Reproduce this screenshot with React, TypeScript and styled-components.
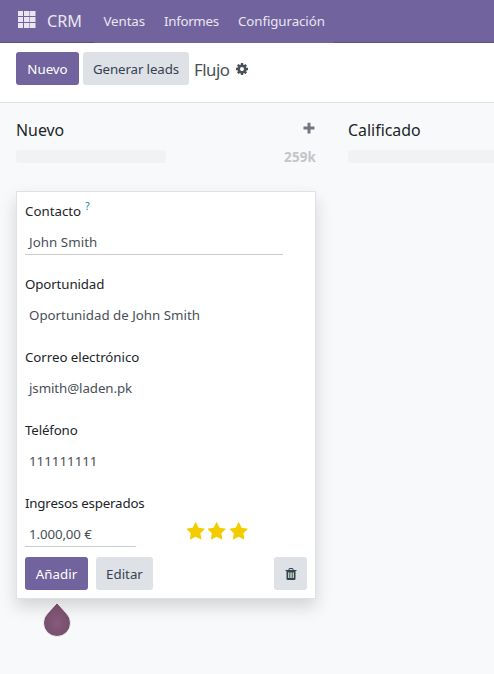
import React from 'react';
import styled, { createGlobalStyle } from 'styled-components';

const GlobalStyle = createGlobalStyle`
  *, *::before, *::after { box-sizing: border-box; }
  html, body { margin: 0; height: 100%; overflow: hidden; }
  body {
    background: #f8f9fb;
    color: #212529;
    font: 13.3px/20px "Noto Sans", "Open Sans", sans-serif;
  }
  svg { display: block; fill: currentColor; }
  button { font: inherit; cursor: pointer; }
`;

const Page = styled.div`
  width: 100%;
  height: 100vh;
  overflow: hidden;
  display: flex;
  flex-direction: column;
`;

const Navbar = styled.header`
  flex: none;
  display: flex;
  height: 43px;
  background: #71639e;
  color: #e9e6f0;
`;

const NavEdge = styled.div<{ $grow?: boolean }>`
  display: flex;
  width: 94px;
  flex: ${p => (p.$grow ? '1' : 'none')};
  border-bottom: 1px solid #5a4f7f;
  padding: ${p => (p.$grow ? '0' : '11px 0 0 18px')};
`;

const AppName = styled.div`
  margin-left: 11px;
  font-size: 16.2px;
  line-height: 20px;
`;

const Menu = styled.nav`
  display: flex;
  width: 240px;
  padding-left: 9.5px;
`;

const MenuItem = styled.a<{ $width: number; $track?: number }>`
  flex: none;
  width: ${p => p.$width}px;
  line-height: 42px;
  letter-spacing: ${p => p.$track ?? 0}px;
  white-space: nowrap;
`;

const ControlPanel = styled.section`
  flex: none;
  display: flex;
  height: 60px;
  padding: 9px 16px 0;
  background: #fff;
  border-bottom: 1px solid #dee2e6;
`;

const ButtonGroup = styled.div`
  display: flex;
  gap: 4px;
`;

const Button = styled.button<{ $width: number; $primary?: boolean; $track?: number }>`
  display: flex;
  align-items: center;
  justify-content: center;
  flex: none;
  width: ${p => p.$width}px;
  height: 33px;
  padding: 0;
  border: 0;
  border-radius: 3px;
  background: ${p => (p.$primary ? '#71639e' : '#dee2e6')};
  color: ${p => (p.$primary ? '#fff' : '#374151')};
  letter-spacing: ${p => p.$track ?? 0}px;
  white-space: nowrap;
`;

const Breadcrumb = styled.div`
  display: flex;
  align-items: center;
  height: 35px;
  margin-left: 5px;
  color: #495057;
  font-size: 16.8px;
  letter-spacing: -0.5px;
`;

const SettingsIcon = styled.svg`
  margin: -2px 0 0 6.5px;
`;

const Board = styled.main`
  display: flex;
  flex: 1;
  gap: 32px;
  padding: 16px;
`;

const Column = styled.section`
  flex: none;
  width: 300px;
`;

const ColumnHeader = styled.div`
  display: flex;
  justify-content: space-between;
  height: 30px;
  color: #74767f;
`;

const ColumnTitle = styled.h2`
  margin: 0;
  color: #212529;
  font-size: 15.9px;
  line-height: 22px;
  font-weight: 400;
`;

const PlusIcon = styled.svg`
  margin: 3px 1px 0 0;
`;

const Counter = styled.div`
  display: flex;
  justify-content: space-between;
  height: 42px;
`;

const Progress = styled.div<{ $wide?: boolean }>`
  width: ${p => (p.$wide ? 200 : 150)}px;
  height: 13px;
  margin-top: 1px;
  border-radius: 3px;
  background: #f1f2f4;
`;

const Total = styled.strong`
  color: #c3c5c8;
  font-size: 13.4px;
  line-height: 16px;
  letter-spacing: 0.15px;
`;

const Card = styled.form`
  height: 408px;
  padding: 9px 8px 8px;
  background: #fff;
  border: 1px solid #dee2e6;
  box-shadow: 0 8px 16px rgba(0, 0, 0, 0.15);
  display: flex;
  flex-direction: column;
`;

const Field = styled.div<{ $height?: number }>`
  flex: none;
  height: ${p => p.$height ?? 73}px;
`;

const Label = styled.div<{ $track?: number }>`
  display: flex;
  gap: 4px;
  height: 20px;
  letter-spacing: ${p => p.$track ?? 0}px;
  white-space: nowrap;
`;

const Help = styled.sup`
  color: #017e9b;
  font-size: 10px;
  line-height: 11px;
`;

const Value = styled.div<{ $width?: number; $line?: boolean; $track?: number }>`
  width: ${p => p.$width ?? 258}px;
  height: 24px;
  margin-top: 10px;
  padding-left: 4px;
  line-height: 22px;
  border-bottom: 1px solid ${p => (p.$line ? '#c9cacc' : 'transparent')};
  color: #495057;
  letter-spacing: ${p => p.$track ?? 0}px;
  white-space: nowrap;
`;

const Revenue = styled.div`
  display: flex;
  gap: 50px;
`;

const Stars = styled.div`
  display: flex;
  gap: 2px;
  padding-top: 9px;
  color: #f3cc00;
`;

const Actions = styled.div`
  display: flex;
  gap: 8px;
`;

const DeleteSlot = styled.div`
  margin-left: auto;
`;

const TourPointer = styled.svg`
  position: relative;
  margin: 3px 0 0 26px;
`;

const GearIcon = () => (
  <SettingsIcon width="12" height="12" viewBox="0 128 1536 1536">
    <path d="M1024 896q0-106-75-181t-181-75-181 75-75 181 75 181 181 75 181-75 75-181zm512-109v222q0 12-8 23t-20 13l-185 28q-19 54-39 91 35 50 107 138 10 12 10 25t-9 23q-27 37-99 108t-94 71q-12 0-26-9l-138-108q-44 23-91 38-16 136-29 186-7 28-36 28h-222q-14 0-24.5-8.5t-11.5-21.5l-28-184q-49-16-90-37l-141 107q-10 9-25 9-14 0-25-11-126-114-165-168-7-10-7-23 0-12 8-23 15-21 51-66.5t54-70.5q-27-50-41-99l-183-27q-13-2-21-12.5t-8-23.5v-222q0-12 8-23t19-13l186-28q14-46 39-92-40-57-107-138-10-12-10-24 0-10 9-23 26-36 98.5-107.5t94.5-71.5q13 0 26 10l138 107q44-23 91-38 16-136 29-186 7-28 36-28h222q14 0 24.5 8.5t11.5 21.5l28 184q49 16 90 37l142-107q9-9 24-9 13 0 25 10 129 119 165 170 7 8 7 22 0 12-8 23-15 21-51 66.5t-54 70.5q26 50 41 98l183 28q13 2 21 12.5t8 23.5z" />
  </SettingsIcon>
);

const TrashIcon = () => (
  <svg width="12" height="12" viewBox="0 0 12 12" fillRule="evenodd">
    <path d="M.5 2H3.200L4 .5Q4.200 0 4.800 0H7.200Q7.800 0 8 .5L8.800 2H11.500V3H10.500V10.700Q10.500 12 9.300 12H2.700Q1.500 12 1.500 10.700V3H.5ZM4.300 2H7.700L7.200 1H4.800ZM3.300 4.500V10H4.200V4.500ZM5.500 4.500V10H6.500V4.500ZM7.800 4.500V10H8.700V4.500Z" />
    <path fill="#b5dfba" d="M3.300 4.500H4.200V10H3.300ZM5.500 4.500H6.500V10H5.500ZM7.800 4.500H8.700V10H7.800Z" />
  </svg>
);

const StarIcon = () => (
  <svg width="19.3" height="19.3" viewBox="0 0 1792 1792">
    <path d="M1728 647q0 22-26 48l-363 354 86 500q1 7 1 20 0 21-10.500 35.500t-30.500 14.500q-19 0-40-12l-449-236-449 236q-22 12-40 12-21 0-31.500-14.500t-10.500-35.500q0-6 2-20l86-500-364-354q-25-27-25-48 0-37 56-46l502-73 225-455q19-41 49-41t49 41l225 455 502 73q56 9 56 46z" />
  </svg>
);

const AppsIcon = () => (
  <svg width="18" height="17" viewBox="0 0 18 17">
    {[0, 6, 12].map(y =>
      [0, 6, 12].map(x => <rect key={`${x}-${y}`} x={x} y={y} width={x === 0 ? 5 : 5.5} height="5" />)
    )}
  </svg>
);

export default function App() {
  return (
    <>
      <GlobalStyle />
      <Page>
        <Navbar>
          <NavEdge>
            <AppsIcon />
            <AppName>CRM</AppName>
          </NavEdge>
          <Menu>
            <MenuItem $width={60.5} $track={-0.1}>Ventas</MenuItem>
            <MenuItem $width={74} $track={-0.3}>Informes</MenuItem>
            <MenuItem $width={88} $track={-0.08}>Configuración</MenuItem>
          </Menu>
          <NavEdge $grow />
        </Navbar>
        <ControlPanel>
          <ButtonGroup>
            <Button $primary $width={63}>Nuevo</Button>
            <Button $width={106} $track={-0.12}>Generar leads</Button>
          </ButtonGroup>
          <Breadcrumb>
            Flujo
            <GearIcon />
          </Breadcrumb>
        </ControlPanel>
        <Board>
          <Column>
            <ColumnHeader>
              <ColumnTitle>Nuevo</ColumnTitle>
              <PlusIcon width="12" height="12" viewBox="0 0 12 12">
                <path d="M4.500 .8h3v3.700h4v3h-4v4h-3v-4h-4v-3h4z" />
              </PlusIcon>
            </ColumnHeader>
            <Counter>
              <Progress />
              <Total>259k</Total>
            </Counter>
            <Card onSubmit={e => e.preventDefault()}>
              <Field>
                <Label>Contacto<Help>?</Help></Label>
                <Value $line $track={0.05}>John Smith</Value>
              </Field>
              <Field>
                <Label $track={-0.12}>Oportunidad</Label>
                <Value>Oportunidad de John Smith</Value>
              </Field>
              <Field>
                <Label $track={-0.05}>Correo electrónico</Label>
                <Value $track={-0.08}>jsmith@laden.pk</Value>
              </Field>
              <Field>
                <Label $track={-0.15}>Teléfono</Label>
                <Value>111111111</Value>
              </Field>
              <Field $height={64}>
                <Label $track={-0.18}>Ingresos esperados</Label>
                <Revenue>
                  <Value $line $width={111} $track={-0.12}>1.000,00 €</Value>
                  <Stars>
                    <StarIcon />
                    <StarIcon />
                    <StarIcon />
                  </Stars>
                </Revenue>
              </Field>
              <Actions>
                <Button type="button" $primary $width={63}>Añadir</Button>
                <Button type="button" $width={57}>Editar</Button>
                <DeleteSlot>
                  <Button type="button" $width={33} aria-label="Eliminar"><TrashIcon /></Button>
                </DeleteSlot>
              </Actions>
            </Card>
            <TourPointer width="30" height="38" viewBox="0 0 30 38">
              <defs>
                <radialGradient id="drop" cx="50%" cy="60%" r="60%">
                  <stop offset="0" stopColor="#875a7b" />
                  <stop offset="1" stopColor="#714b67" />
                </radialGradient>
              </defs>
              <path d="M15 .8L24.600 11.500A13.500 13.500 0 1 1 5.400 11.500Z" fill="url(#drop)" stroke="#fff" strokeWidth=".8" />
            </TourPointer>
          </Column>
          <Column>
            <ColumnHeader>
              <ColumnTitle>Calificado</ColumnTitle>
            </ColumnHeader>
            <Counter>
              <Progress $wide />
            </Counter>
          </Column>
        </Board>
      </Page>
    </>
  );
}
